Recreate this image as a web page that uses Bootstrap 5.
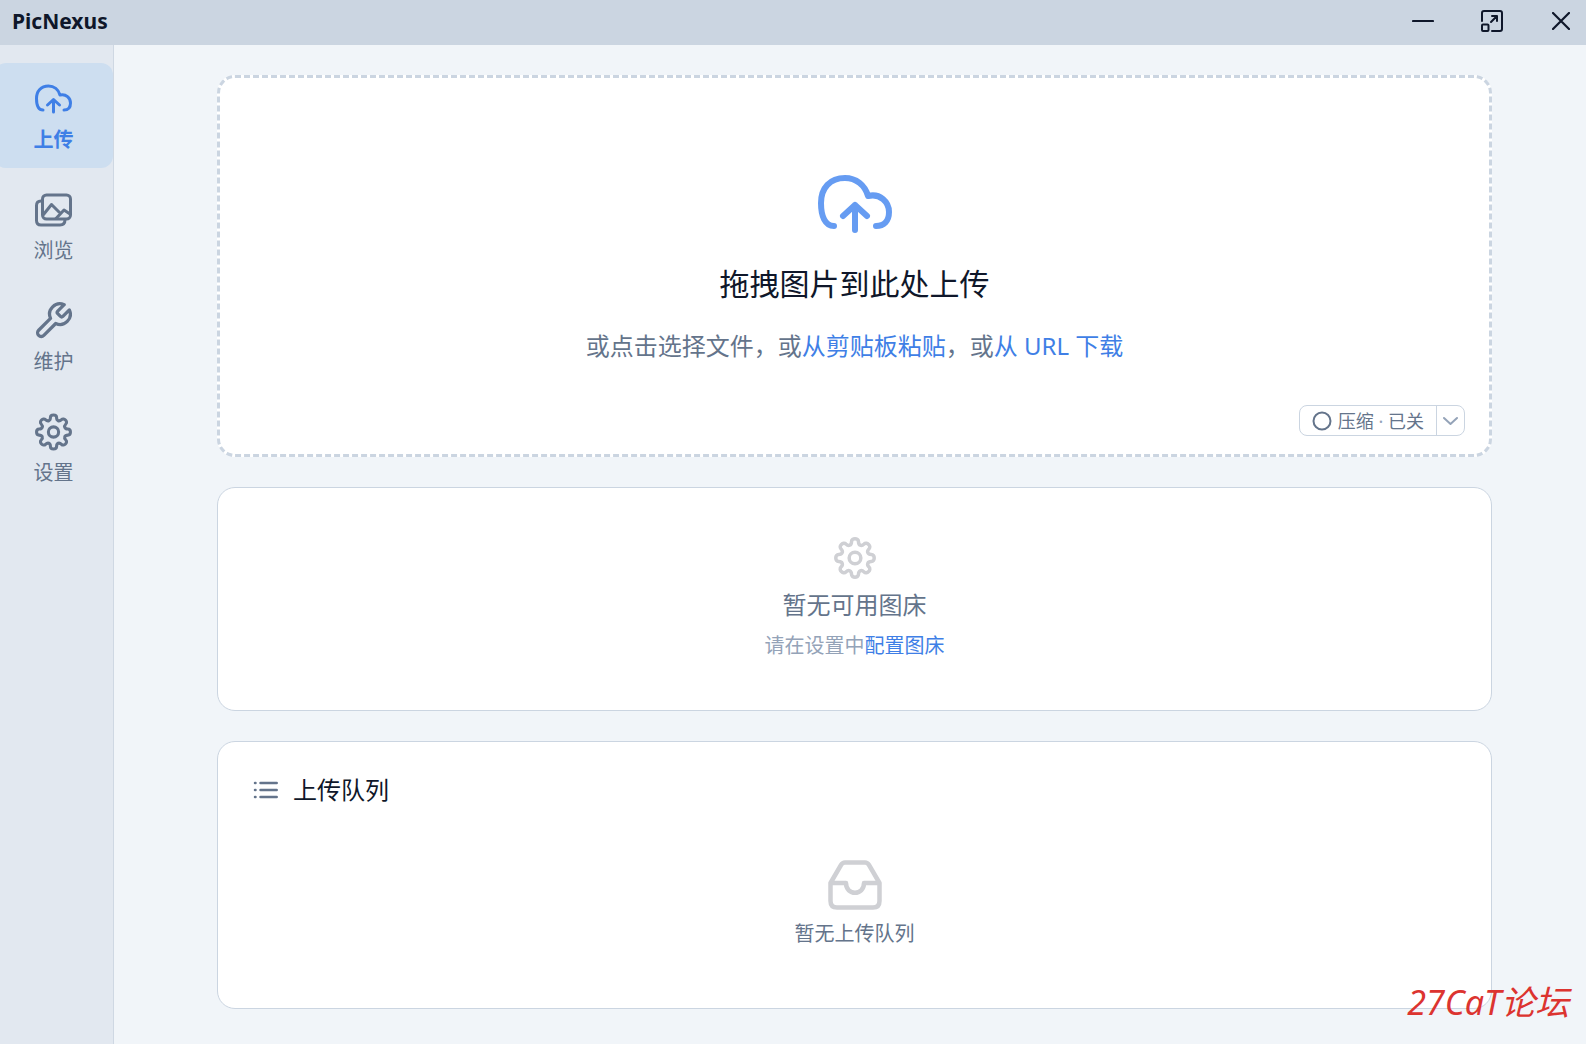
<!DOCTYPE html>
<html lang="zh-CN">
<head>
<meta charset="utf-8">
<meta name="viewport" content="width=device-width, initial-scale=1">
<title>PicNexus</title>
<link href="https://cdn.jsdelivr.net/npm/bootstrap@5.3.0/dist/css/bootstrap.min.css" rel="stylesheet">
<style>
  :root { --ink: #0f172a; --muted: #64748b; --faint: #94a3b8; --line: #cbd5e1; --accent: #3f7fe6; }
  body { font-family: "Noto Sans", "Noto Sans CJK SC", sans-serif; color: var(--ink); background: #f1f5f9; font-size: 20px; line-height: 30px; }
  svg { fill: none; stroke: currentColor; stroke-linecap: round; stroke-linejoin: round; flex: none; }
  a { color: var(--accent); text-decoration: none; }
  .title-bar { height: 45px; background: #cbd5e1; padding: 0 0 4px 12px; }
  .app-name { font-size: 21px; font-weight: 700; }
  .win-btn { width: 51px; height: 41px; border: 0; background: none; color: var(--ink); }
  .win-controls { gap: 18px; }
  .side-bar { width: 114px; background: #e2e8f0; border-right: 1px solid #cfd8e3; padding-top: 18px; gap: 6px; }
  .side-link { height: 105px; margin-left: -6px; padding-top: 15px; gap: 5px; color: var(--muted); border-radius: 12px; }
  .side-link svg { width: 37px; height: 42px; }
  .side-link.active { color: var(--accent); background: #cddef0; font-weight: 700; }
  .work-area { padding: 30px 94px 30px 103px; gap: 30px; }
  .drop-zone { background: #fff; border: 3px dashed var(--line); border-radius: 18px; padding: 96px 24px 18px; }
  .drop-title { font-size: 30px; line-height: 40px; margin: 30px 0 24px; font-weight: 400; }
  .text-line { font-size: 24px; line-height: 36px; font-weight: 400; }
  .muted-text { color: var(--muted); }
  .faint-text { color: var(--faint); }
  .pale-icon { color: #cfd0d4; }
  .compress { margin-top: 41px; height: 31px; border: 1px solid var(--line); border-radius: 8px; }
  .compress button { border: 0; background: none; color: var(--muted); font-size: 18px; line-height: 28px; padding: 0 12px; gap: 6px; }
  .compress button + button { border-left: 1px solid var(--line); color: var(--faint); padding: 0 6px; }
  .panel { background: #fff; border: 1px solid var(--line); border-radius: 18px; }
  .host-panel { padding: 49px 24px; }
  .queue-panel { padding: 30px 35px 59px; }
  .queue-head { gap: 15px; }
  .queue-empty { margin-top: 52px; gap: 9px; }
  .site-mark { right: 17px; bottom: 20px; font-size: 34px; line-height: 44px; color: #dc3430; font-style: italic; }
</style>
</head>
<body class="min-vh-100 d-flex flex-column">
<svg width="0" height="0" class="position-absolute" aria-hidden="true">
  <symbol id="i-cloud" viewBox="0 0 74 60"><path stroke-width="6" d="M16 52C7 52 3 42 3 29C3 14 12 4 27 4C38 4 47 11 50 22C62 19 71 28 71 38C71 47 66 52 58 52M37 31V56M25 42L37 31L49 42"/></symbol>
  <symbol id="i-gear" viewBox="-18 -18 36 36"><path d="M-3-14C-3-17.300 3-17.300 3-14C3-10.800 5.500-9.800 7.800-12C10.100-14.400 14.400-10.100 12-7.800C9.800-5.500 10.800-3 14-3C17.300-3 17.300 3 14 3C10.800 3 9.800 5.500 12 7.800C14.400 10.100 10.100 14.400 7.800 12C5.500 9.800 3 10.800 3 14C3 17.300-3 17.300-3 14C-3 10.800-5.500 9.800-7.800 12C-10.100 14.400-14.400 10.100-12 7.800C-9.800 5.500-10.800 3-14 3C-17.300 3-17.300-3-14-3C-10.800-3-9.800-5.500-12-7.800C-14.400-10.100-10.100-14.400-7.800-12C-5.500-9.800-3-10.800-3-14Z"/><circle r="5"/></symbol>
</svg>

<header class="title-bar d-flex align-items-center justify-content-between">
  <span class="app-name">PicNexus</span>
  <div class="win-controls d-flex">
    <button class="win-btn d-flex align-items-center justify-content-center" type="button" aria-label="最小化"><svg width="22" height="22" viewBox="0 0 22 22" stroke-width="2.200"><path d="M1 11H21"/></svg></button>
    <button class="win-btn d-flex align-items-center justify-content-center" type="button" aria-label="最大化"><svg width="22" height="22" viewBox="0 0 22 22" stroke-width="2"><path d="M1 11V3Q1 1 3 1H19Q21 1 21 3V19Q21 21 19 21H11M10 12L16 6M11 6H16V11"/><rect x="1" y="14.500" width="6.500" height="6.500" rx="1"/></svg></button>
    <button class="win-btn d-flex align-items-center justify-content-center" type="button" aria-label="关闭"><svg width="18" height="18" viewBox="0 0 18 18" stroke-width="2.200"><path d="M1 1L17 17M17 1L1 17"/></svg></button>
  </div>
</header>

<div class="d-flex flex-grow-1">
  <nav class="side-bar d-flex flex-column flex-shrink-0">
    <a class="side-link active d-flex flex-column align-items-center" href="#" aria-current="page"><svg><use href="#i-cloud"/></svg>上传</a>
    <a class="side-link d-flex flex-column align-items-center" href="#"><svg viewBox="0 0 37 33" stroke-width="3"><rect x="7.500" y="1.500" width="28" height="24" rx="4"/><path d="M7.500 7.500H6Q1.500 7.500 1.500 12V27Q1.500 31.500 6 31.500H25Q30 31.500 30 26M8.500 21L16.500 11L25 19.500M21 25L29 16.500L35 20.500"/></svg>浏览</a>
    <a class="side-link d-flex flex-column align-items-center" href="#"><svg viewBox="1.500 1 21.500 22" stroke-width="1.900"><path d="M14.700 6.300a1 1 0 0 0 0 1.400l1.600 1.600a1 1 0 0 0 1.400 0l3.770-3.770a6 6 0 0 1-7.940 7.940l-6.910 6.910a2.120 2.120 0 0 1-3-3l6.910-6.910a6 6 0 0 1 7.940-7.940l-3.760 3.760z"/></svg>维护</a>
    <a class="side-link d-flex flex-column align-items-center" href="#"><svg stroke-width="3"><use href="#i-gear"/></svg>设置</a>
  </nav>

  <main class="work-area d-flex flex-column flex-grow-1">
    <section class="drop-zone d-flex flex-column align-items-center">
      <svg width="74" height="60" color="#669cf2"><use href="#i-cloud"/></svg>
      <h1 class="drop-title">拖拽图片到此处上传</h1>
      <p class="text-line muted-text mb-0">或点击选择文件，或<a href="#">从剪贴板粘贴</a>，或<a href="#">从 URL 下载</a></p>
      <div class="compress d-flex align-self-end">
        <button class="d-flex align-items-center" type="button"><svg width="20" height="20" viewBox="0 0 20 20" stroke-width="2"><circle cx="10" cy="10" r="8.500"/></svg><span>压缩 <span class="faint-text">·</span> 已关</span></button>
        <button class="d-flex align-items-center" type="button" aria-label="压缩选项"><svg width="15" height="10" viewBox="0 0 15 10" stroke-width="2"><path d="M1 2L7.500 8L14 2"/></svg></button>
      </div>
    </section>

    <section class="panel host-panel d-flex flex-column align-items-center">
      <svg class="pale-icon" width="42" height="42" stroke-width="3"><use href="#i-gear"/></svg>
      <h2 class="text-line muted-text mt-2 mb-2">暂无可用图床</h2>
      <p class="faint-text mb-0">请在设置中<a href="#">配置图床</a></p>
    </section>

    <section class="panel queue-panel">
      <div class="queue-head d-flex align-items-center">
        <svg class="muted-text" width="25" height="18" viewBox="0 0 25 18" stroke-width="2.500"><path d="M7.500 2H23.700M7.500 9H23.700M7.500 16H23.700M2 2H2.500M2 9H2.500M2 16H2.500"/></svg>
        <h2 class="text-line mb-0">上传队列</h2>
      </div>
      <div class="queue-empty d-flex flex-column align-items-center">
        <svg class="pale-icon" width="54" height="50" viewBox="0 0 54 50" stroke-width="4.500"><path d="M2.500 23L13 5Q14.500 2.500 17 2.500H37Q39.500 2.500 41 5L51.500 23V41Q51.500 47.500 45 47.500H9Q2.500 47.500 2.500 41ZM2.500 23H18C18 36 36 36 36 23H51.500"/></svg>
        <span class="muted-text">暂无上传队列</span>
      </div>
    </section>
  </main>
</div>

<div class="site-mark position-absolute">27CaT论坛</div>
<script src="https://cdn.jsdelivr.net/npm/bootstrap@5.3.0/dist/js/bootstrap.bundle.min.js"></script>
</body>
</html>
